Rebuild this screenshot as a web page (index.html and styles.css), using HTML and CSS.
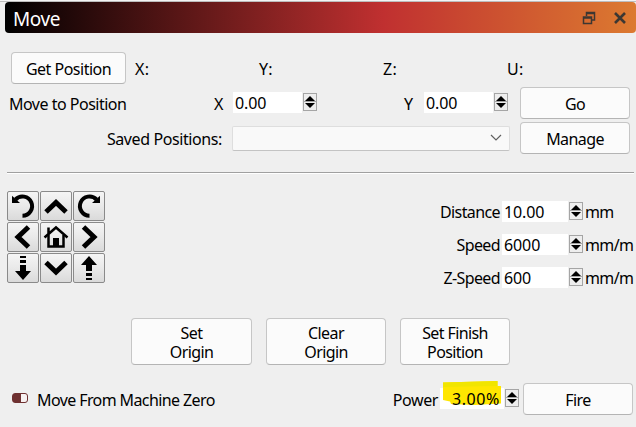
FILE: index.html
```
<!DOCTYPE html>
<html lang="en">
<head>
    <meta charset="UTF-8">
    <meta name="viewport" content="width=device-width, initial-scale=1.0">
    <title>Move</title>
    <link rel="stylesheet" href="styles.css">
</head>
<body>
    <div class="panel">
        <header class="titlebar">
            <h1 class="title">Move</h1>
            <svg class="float-icon" width="14" height="14" viewBox="0 0 14 14"><path d="M4.500 5V1.500h8V9H10M4.500 2.500h8M1.500 6h8v6.500h-8zM1.500 7h8" /></svg>
            <svg class="close-icon" width="12" height="12" viewBox="0 0 12 12"><path d="M1 1l10 10M11 1L1 11" /></svg>
        </header>

        <!-- Current position -->
        <div class="row position-row">
            <button class="button get-position">Get Position</button>
            <span class="axis">X:</span>
            <span class="axis">Y:</span>
            <span class="axis">Z:</span>
            <span class="axis">U:</span>
        </div>

        <!-- Move to -->
        <div class="row goto-row">
            <span class="goto-label">Move to Position</span>
            <span class="axis-x">X</span>
            <div class="spin"><span class="value">0.00</span><span class="steps"><i class="up"></i><i class="down"></i></span></div>
            <span class="axis-y">Y</span>
            <div class="spin"><span class="value">0.00</span><span class="steps"><i class="up"></i><i class="down"></i></span></div>
            <button class="button side">Go</button>
        </div>

        <div class="row saved-row">
            <span class="saved-label">Saved Positions:</span>
            <div class="combo">
                <svg width="12" height="8" viewBox="0 0 12 8"><path d="M1 1l5 5 5-5" /></svg>
            </div>
            <button class="button side">Manage</button>
        </div>

        <hr class="divider">

        <!-- Jog controls -->
        <div class="jog">
            <div class="pad">
                <button class="key"><svg viewBox="0 0 32 30"><path class="arc" d="M15.500 24.700a9.600 9.600 0 1 0-7-16.200" /><path d="M5 4.800v7.200h8z" /></svg></button>
                <button class="key"><svg viewBox="0 0 32 30"><path class="line" d="M6 21l10-9.500L26 21" /></svg></button>
                <button class="key"><svg viewBox="0 0 32 30"><path class="arc" d="M16.500 24.700a9.600 9.600 0 1 1 7-16.200" /><path d="M27 4.800v7.200h-8z" /></svg></button>
                <button class="key"><svg viewBox="0 0 32 30"><path class="line" d="M21.500 5L11 15l10.500 10" /></svg></button>
                <button class="key"><svg viewBox="0 0 32 30"><path class="roof" d="M4.500 15.500L16 5.500l11.500 10M8.500 13V5.500" /><path class="wall" d="M8.500 13v11.500h15V13" /><path d="M13 25v-9h6v9z" /></svg></button>
                <button class="key"><svg viewBox="0 0 32 30"><path class="line" d="M10.500 5L21 15 10.500 25" /></svg></button>
                <button class="key"><svg viewBox="0 0 32 30"><path d="M13 3h6v2h-6zM13 7h6v3h-6zM13 12h6v6h5l-8 9-8-9h5z" /></svg></button>
                <button class="key"><svg viewBox="0 0 32 30"><path class="line" d="M6 9.500l10 9.500L26 9.500" /></svg></button>
                <button class="key"><svg viewBox="0 0 32 30"><path d="M13 27h6v-2h-6zM13 23h6v-3h-6zM13 18h6v-6h5l-8-9-8 9h5z" /></svg></button>
            </div>
            <div class="speeds">
                <div class="setting">
                    <span class="label">Distance</span>
                    <div class="spin"><span class="value">10.00</span><span class="steps"><i class="up"></i><i class="down"></i></span></div>
                    <span class="unit">mm</span>
                </div>
                <div class="setting">
                    <span class="label">Speed</span>
                    <div class="spin"><span class="value">6000</span><span class="steps"><i class="up"></i><i class="down"></i></span></div>
                    <span class="unit">mm/m</span>
                </div>
                <div class="setting">
                    <span class="label">Z-Speed</span>
                    <div class="spin"><span class="value">600</span><span class="steps"><i class="up"></i><i class="down"></i></span></div>
                    <span class="unit">mm/m</span>
                </div>
            </div>
        </div>

        <!-- Origin -->
        <div class="origins">
            <button class="button">Set<br>Origin</button>
            <button class="button">Clear<br>Origin</button>
            <button class="button">Set Finish<br>Position</button>
        </div>

        <!-- Laser power -->
        <div class="row power-row">
            <span class="toggle"></span>
            <span class="zero-label">Move From Machine Zero</span>
            <span class="power-label">Power</span>
            <div class="spin power">
                <span class="value">
                    <svg class="marker" width="60" height="27" viewBox="0 0 60 27"><path d="M0 1.500L54.500 0v5H58v17.500l-26 1.500-24-1-1-2.500L0 19z" /><path class="overlap" d="M0 1.500L54.500 0v5L0 6z" /></svg>
                    <span class="percent">3.00%</span>
                </span>
                <span class="steps"><i class="up"></i><i class="down"></i></span>
            </div>
            <button class="button side">Fire</button>
        </div>
    </div>
</body>
</html>
```
FILE: styles.css
```
:root {
    --bg: #efefef;
    --button: #fbfbfb;
    --border: #c6c6c6;
}

* {
    box-sizing: border-box;
}

body {
    margin: 0;
    background: var(--bg);
    color: #000;
    font-family: "Noto Sans", sans-serif;
    font-size: 16px;
    letter-spacing: -0.6px;
    line-height: 20px;
    overflow: hidden;
}

.panel {
    width: 636px;
    height: 427px;
    border-top: 1px solid #f4f4f4;
    box-shadow: inset 0 1px #bdbdbd;
    padding-top: 1px;
    white-space: nowrap;
}

.titlebar {
    display: flex;
    align-items: center;
    height: 31px;
    margin-left: 5px;
    padding: 0 10px 0 8px;
    border-radius: 4px;
    background: linear-gradient(90deg, #000, #c03030 60%, #dc7a30);
}

.title {
    flex: 1;
    margin: 0;
    padding-top: 2px;
    color: #fff;
    font-size: 19px;
    font-weight: normal;
    letter-spacing: -0.4px;
}

.float-icon,
.close-icon {
    fill: none;
    stroke: #3c3732;
    stroke-width: 1.5;
}

.close-icon {
    margin-left: 18px;
    stroke-width: 2.6;
}

.row {
    display: flex;
    align-items: center;
    height: 32px;
}

.row > span:not(.toggle) {
    padding-top: 2px;
}

.button {
    height: 32px;
    padding: 2px 0 0;
    border: 1px solid var(--border);
    border-bottom-color: #b4b4b4;
    border-radius: 4px;
    background: var(--button);
    color: #000;
    font: inherit;
    letter-spacing: inherit;
}

.side {
    width: 110px;
}

.position-row {
    margin-top: 19px;
    padding-left: 11px;
}

.get-position {
    width: 115px;
    margin-right: 9px;
    letter-spacing: -0.5px;
}

.axis {
    width: 124px;
    letter-spacing: 0.3px;
}

.goto-row {
    margin-top: 3px;
    padding-left: 9px;
}

.goto-label {
    width: 205px;
    letter-spacing: -0.5px;
}

.axis-x {
    width: 19px;
}

.axis-y {
    width: 20px;
    margin-left: 87px;
}

.goto-row .side {
    margin-left: 12px;
}

/* Number boxes */
.spin {
    display: flex;
    align-items: flex-start;
    gap: 1px;
    height: 22px;
}

.value {
    width: 69px;
    height: 21px;
    padding-left: 2px;
    background: #fff;
    letter-spacing: -0.1px;
    line-height: 22px;
}

.steps {
    display: flex;
    flex-direction: column;
    justify-content: space-evenly;
    align-items: center;
    width: 14px;
    height: 18px;
    margin-top: 1px;
    border: 1px solid #a5a5a5;
    background: linear-gradient(#eee 7px, #a5a5a5 7px, #a5a5a5 8px, #eee 8px);
}

.up,
.down {
    border: 5px solid transparent;
}

.up {
    border-top: 0;
    border-bottom-color: #000;
}

.down {
    border-bottom: 0;
    border-top-color: #000;
}

.saved-row {
    margin-top: 3px;
}

.saved-label {
    width: 232px;
    padding-right: 10px;
    text-align: right;
    letter-spacing: -0.4px;
}

.combo {
    display: flex;
    align-items: center;
    justify-content: flex-end;
    width: 278px;
    height: 25px;
    margin-right: 10px;
    padding-right: 7px;
    border: 1px solid #dedede;
    border-bottom-color: #c3c3c3;
    border-radius: 2px;
    background: #f9f9f9;
}

.combo path {
    fill: none;
    stroke: #606060;
    stroke-width: 1.2;
}

.divider {
    height: 2px;
    margin: 18px 2px 0 7px;
    border: 0;
    border-top: 1px solid #a0a0a0;
    background: #fff;
}

.jog {
    display: flex;
    justify-content: space-between;
    height: 109px;
    padding: 17px 0 0 7px;
}

.pad {
    display: grid;
    grid-template-columns: repeat(3, 32px);
    grid-auto-rows: 30px;
    gap: 1px;
}

.key {
    padding: 0;
    border: 1px solid #8a8a8a;
    border-radius: 2px;
    background: linear-gradient(#f5f5f5, #e9e9e9 50%, #dadada);
}

.key svg {
    display: block;
    width: 32px;
    height: 30px;
    margin: -1px;
}

.arc,
.line,
.roof,
.wall {
    fill: none;
    stroke: #000;
    stroke-width: 4;
}

.line {
    stroke-width: 5;
}

.roof,
.wall {
    stroke-width: 2.5;
}

.speeds {
    display: flex;
    flex-direction: column;
    gap: 11px;
    width: 196px;
    padding-top: 10px;
}

.setting {
    display: flex;
    align-items: center;
    height: 22px;
}

.label {
    flex: none;
    width: 62px;
    padding-right: 2px;
    text-align: right;
    letter-spacing: -0.6px;
}

.setting .spin {
    flex: none;
}

.setting .value {
    width: 66px;
}

.unit {
    margin-left: 2px;
}

.origins {
    display: flex;
    gap: 14px;
    margin: 35px 0 0 131px;
    line-height: 19px;
}

.origins .button {
    width: 121px;
    height: 47px;
}

.origins .button:nth-child(2) {
    width: 120px;
}

.origins .button:last-child {
    width: 110px;
}

.power-row {
    margin-top: 18px;
    padding: 0 3px 0 12px;
}

.toggle {
    width: 16px;
    height: 10px;
    margin-bottom: 2px;
    border: 1px solid #6e3030;
    border-radius: 3px;
    background: linear-gradient(90deg, #6e3030 8px, #f7f1f1 8px);
}

.row > .zero-label {
    flex: 1;
    margin-left: 9px;
    padding-top: 0;
}

.power-label {
    margin-right: 2px;
    letter-spacing: -0.4px;
}

.power {
    margin-right: 4px;
}

.power .value {
    position: relative;
    width: 64px;
    padding-right: 4px;
    letter-spacing: 0.6px;
    text-align: right;
}

/* Highlighter stroke over the power value */
.marker {
    position: absolute;
    top: -7px;
    left: 3px;
    fill: #ffe600;
}

.marker .overlap {
    fill: #f1e500;
}

.percent {
    position: relative;
}
```
